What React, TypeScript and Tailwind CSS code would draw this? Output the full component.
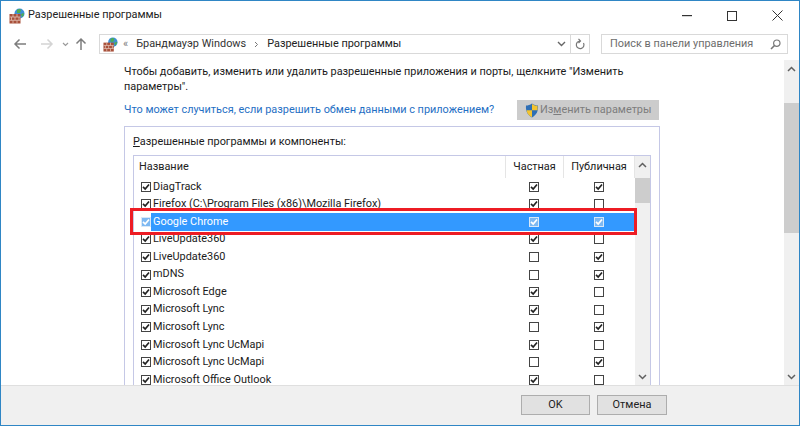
import React from "react";

const rows: [string, boolean, boolean, boolean?][] = [
  ["DiagTrack", true, true],
  ["Firefox (C:\\Program Files (x86)\\Mozilla Firefox)", true, false],
  ["Google Chrome", true, true, true],
  ["LiveUpdate360", true, false],
  ["LiveUpdate360", false, true],
  ["mDNS", false, true],
  ["Microsoft Edge", true, false],
  ["Microsoft Lync", true, false],
  ["Microsoft Lync", false, true],
  ["Microsoft Lync UcMapi", true, false],
  ["Microsoft Lync UcMapi", false, true],
  ["Microsoft Office Outlook", true, false],
];

function Check({ on, sel }: { on: boolean; sel?: boolean }) {
  return (
    <svg width="10" height="10" viewBox="0 0 10 10" className="block shrink-0">
      <rect x="0.5" y="0.5" width="9" height="9" fill={sel ? "#7db8f2" : "#fff"} stroke={sel ? "#d8e8f8" : "#444"} />
      {on && <path d="M2 4.8 L4.2 7 L8 2.5" fill="none" stroke={sel ? "#fff" : "#222"} strokeWidth="1.7" />}
    </svg>
  );
}

function Firewall({ size }: { size: number }) {
  return (
    <svg width={size} height={size} viewBox="0 0 16 16" className="block shrink-0">
      <circle cx="10.5" cy="5.5" r="5" fill="#3d8fd6" />
      <path d="M8 2 q3-2 4 0 l-1 3 -3 0z M12 6l3-1 q0 3-2 4z" fill="#4fae4f" />
      <rect x="0.5" y="6" width="11" height="9.5" fill="#a8503a" />
      <path d="M0.5 9h11M0.5 12.3h11M4 6v3M8 6v3M2.5 9v3.3M6 9v3.3M10 9v3.3M4 12.3v3.2M8 12.3v3.2" stroke="#e3c2b5" strokeWidth="0.8" />
    </svg>
  );
}

function Scrollbar({ thumbTop, thumbH }: { thumbTop: string; thumbH: string }) {
  return (
    <div className="flex flex-col w-[15px] h-full shrink-0 bg-[#f0f0f0] items-stretch">
      <div className="h-[17px] flex items-center justify-center shrink-0">
        <svg width="9" height="6" viewBox="0 0 9 6"><path d="M1 5 L4.5 1.5 L8 5" fill="none" stroke="#606060" strokeWidth="1.5" /></svg>
      </div>
      <div className={`${thumbTop} ${thumbH} bg-[#cdcdcd] shrink-0`} />
      <div className="flex-1" />
      <div className="h-[17px] flex items-center justify-center shrink-0">
        <svg width="9" height="6" viewBox="0 0 9 6"><path d="M1 1 L4.5 4.5 L8 1" fill="none" stroke="#606060" strokeWidth="1.5" /></svg>
      </div>
    </div>
  );
}

export default function App() {
  return (
    <div className="w-[800px] h-[426px] overflow-hidden relative flex flex-col bg-white border border-[#2f86c5] text-[10.9px] text-[#1a1a1a] font-['Roboto',sans-serif]">
      {/* title bar */}
      <div className="h-[29px] shrink-0 flex items-center pl-[8px]">
        <Firewall size={16} />
        <span className="ml-[3px] text-[#222]">Разрешенные программы</span>
        <div className="flex-1" />
        <svg width="10" height="2" viewBox="0 0 10 2" className="mr-[35px]"><rect width="10" height="1.2" fill="#333" /></svg>
        <svg width="10" height="10" viewBox="0 0 10 10" className="mr-[35px]"><rect x="0.5" y="0.5" width="9" height="9" fill="none" stroke="#333" /></svg>
        <svg width="11" height="11" viewBox="0 0 11 11" className="mr-[16px]"><path d="M0.5 0.5 L10.5 10.5 M10.5 0.5 L0.5 10.5" stroke="#333" strokeWidth="1" /></svg>
      </div>
      {/* nav row */}
      <div className="h-[30px] shrink-0 flex items-start pt-[4px]">
        <div className="w-[98px] h-[20px] flex items-center shrink-0 pl-[12px]">
          <svg width="14" height="12" viewBox="0 0 14 12"><path d="M13 6 H2 M6.5 1.5 L2 6 L6.5 10.5" fill="none" stroke="#7d7d7d" strokeWidth="1.5" /></svg>
          <svg width="14" height="12" viewBox="0 0 14 12" className="ml-[13px]"><path d="M1 6 H12 M7.5 1.5 L12 6 L7.5 10.5" fill="none" stroke="#d4d4d4" strokeWidth="1.5" /></svg>
          <svg width="7" height="5" viewBox="0 0 7 5" className="ml-[8px]"><path d="M1 1 L3.5 3.5 L6 1" fill="none" stroke="#9a9a9a" strokeWidth="1.2" /></svg>
          <svg width="12" height="14" viewBox="0 0 12 14" className="ml-[6px]"><path d="M6 13 V2 M1.5 6.5 L6 2 L10.5 6.5" fill="none" stroke="#7d7d7d" strokeWidth="1.5" /></svg>
        </div>
        <div className="w-[491px] h-[20px] border border-[#d9d9d9] flex items-center shrink-0 pl-[3px]">
          <Firewall size={15} />
          <span className="ml-[5px] text-[#777] text-[11px]">«</span>
          <span className="ml-[8px] text-[#333]">Брандмауэр Windows</span>
          <svg width="5" height="7" viewBox="0 0 5 7" className="ml-[8px]"><path d="M1 1 L3.5 3.5 L1 6" fill="none" stroke="#777" /></svg>
          <span className="ml-[8px] text-[#222]">Разрешенные программы</span>
          <div className="flex-1" />
          <svg width="9" height="6" viewBox="0 0 9 6" className="mr-[4px]"><path d="M1 1 L4.5 4.5 L8 1" fill="none" stroke="#666" strokeWidth="1.4" /></svg>
          <div className="w-[19px] h-full border-l border-[#d9d9d9] flex items-center justify-center">
            <svg width="10" height="12" viewBox="0 0 10 12"><path d="M8.5 5 A3.8 3.8 0 1 1 5 3 M3.5 0.8 L5.5 3 L3.5 5" fill="none" stroke="#777" strokeWidth="1.2" /></svg>
          </div>
        </div>
        <div className="ml-[11px] w-[187px] h-[20px] border border-[#d9d9d9] flex items-center shrink-0 pl-[8px] pr-[6px]">
          <span className="text-[#6d6d6d]">Поиск в панели управления</span>
          <div className="flex-1" />
          <svg width="11" height="11" viewBox="0 0 11 11"><circle cx="6.8" cy="4.2" r="3.2" fill="none" stroke="#777" strokeWidth="1.2" /><path d="M4.5 6.5 L1 10" stroke="#777" strokeWidth="1.6" /></svg>
        </div>
      </div>
      {/* main */}
      <div className="h-[325px] shrink-0 flex">
        <div className="flex-1 min-w-0 pl-[123px] pt-[4px] flex flex-col">
          <div className="leading-[15px] w-[510px]">Чтобы добавить, изменить или удалить разрешенные приложения и порты, щелкните "Изменить параметры".</div>
          <div className="mt-[6px] h-[20px] w-[535px] flex items-center justify-between">
            <span className="text-[#1f6fc4] whitespace-nowrap">Что может случиться, если разрешить обмен данными с приложением?</span>
            <div className="w-[142px] h-[20px] bg-[#cccccc] flex items-center pl-[8px] shrink-0">
              <svg width="14" height="15" viewBox="0 0 14 15" className="shrink-0">
                <path d="M7 0.5 C9 2 11 2.5 13 2.5 C13.5 8 11.5 12 7 14.5 C2.5 12 0.5 8 1 2.5 C3 2.5 5 2 7 0.5Z" fill="#2f6fb5" />
                <path d="M7 1 C9 2.3 11 2.8 12.6 2.8 L12.6 7.2 L7 7.2Z" fill="#f4c430" />
                <path d="M7 7.2 L1.5 7.2 C2 10.5 4 12.8 7 14.2Z" fill="#f4c430" />
              </svg>
              <span className="ml-[1px] text-[#7d7d7d] whitespace-nowrap">Из<u>м</u>енить параметры</span>
            </div>
          </div>
          <div className="mt-[6px] w-[536px] flex-1 min-h-0 border-t border-x border-[#c5c8e6] pl-[8px] pr-[8px] flex flex-col">
            <div className="h-[28px] shrink-0 flex items-center pt-[2px]"><span><u>Р</u>азрешенные программы и компоненты:</span></div>
            <div className="flex-1 min-h-0 border-t border-x border-[#c5c8e6] flex">
              <div className="flex-1 min-w-0 flex flex-col">
                <div className="h-[22px] shrink-0 flex">
                  <div className="flex-1 pl-[5px] flex items-center text-[#222]">Название</div>
                  <div className="w-[58px] border-l border-[#e5e5e5] flex items-center justify-center">Частная</div>
                  <div className="w-[72px] border-l border-r border-[#e5e5e5] flex items-center justify-center">Публичная</div>
                </div>
                <div className="flex-1 min-h-0 overflow-hidden">
                  {rows.map(([n, a, b, sel], i) => (
                    <div key={i} className="h-[17.55px] flex items-center">
                      <div className="w-[17px] pl-[7px] shrink-0"><Check on sel={sel} /></div>
                      <div className={`flex-1 h-full flex items-center min-w-0 pl-[2px] ${sel ? "bg-[#3399ff] text-white" : ""}`}>
                        <span className="flex-1 whitespace-nowrap">{n}</span>
                        <div className="w-[58px] flex justify-center shrink-0"><Check on={a} sel={sel} /></div>
                        <div className="w-[72px] flex justify-center shrink-0"><Check on={b} sel={sel} /></div>
                      </div>
                    </div>
                  ))}
                </div>
              </div>
              <Scrollbar thumbTop="mt-[5px]" thumbH="h-[25px]" />
            </div>
          </div>
        </div>
        <Scrollbar thumbTop="mt-[26px]" thumbH="h-[130px]" />
      </div>
      {/* footer */}
      <div className="flex-1 bg-[#f0f0f0] border-t border-[#dfdfdf] flex items-start justify-end pt-[9px] pr-[132px] gap-[7px]">
        <div className="w-[69px] h-[20px] bg-[#e1e1e1] border border-[#adadad] flex items-center justify-center text-[#222]">OK</div>
        <div className="w-[70px] h-[20px] bg-[#e1e1e1] border border-[#adadad] flex items-center justify-center text-[#222]">Отмена</div>
      </div>
      {/* red highlight annotation */}
      <div className="absolute left-[129px] top-[207px] w-[507px] h-[27px] border-[3px] border-[#ed1c24]" />
    </div>
  );
}
